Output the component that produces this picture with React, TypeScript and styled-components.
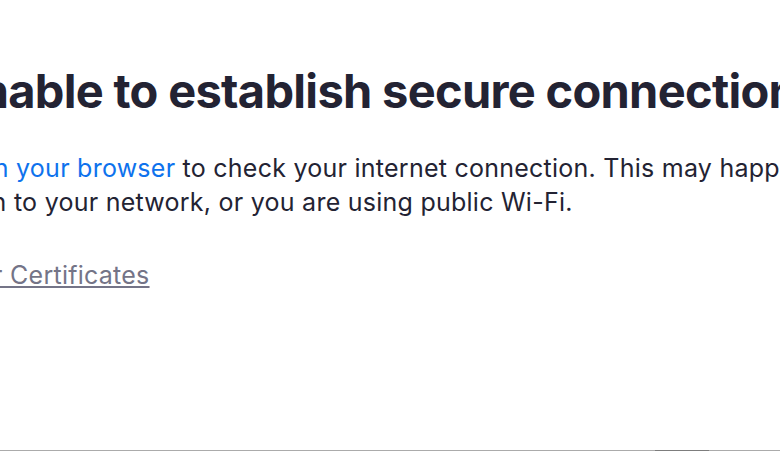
import React from "react";
import styled, { createGlobalStyle } from "styled-components";

const Global = createGlobalStyle`
  html, body { margin: 0; padding: 0; background: #fff; }
  body { font-family: Inter, "Noto Sans", sans-serif; -webkit-font-smoothing: antialiased; }
`;

const Page = styled.div`
  width: 780px;
  height: 452px;
  overflow: hidden;
  display: flex;
  flex-direction: column;
  background: #fff;
`;

const Viewport = styled.div`
  flex: 1;
  overflow: hidden;
`;

const Content = styled.main<{ $scrollX: number }>`
  margin-left: ${(p) => -p.$scrollX}px;
  padding-top: 63px;
  white-space: nowrap;
  color: #232333;
`;

const Heading = styled.h1`
  margin: 0;
  font-size: 47px;
  font-weight: 700;
  line-height: 56px;
  letter-spacing: -0.7px;
  color: #232333;
`;

const Paragraph = styled.p`
  margin: 32px 0 0;
  font-size: 25px;
  line-height: 34px;
  letter-spacing: 0.25px;
  color: #232333;
`;

const Line = styled.span`
  display: block;
`;

const Link = styled.a`
  color: #0e72ed;
  text-decoration: none;
`;

const CertLink = styled.a`
  display: block;
  width: fit-content;
  margin-top: 39px;
  font-size: 25px;
  line-height: 34px;
  letter-spacing: 0.25px;
  color: #747487;
  text-decoration: underline;
  text-underline-offset: 2px;
  text-decoration-thickness: 1.5px;
`;

const ScrollTrack = styled.div`
  height: 1px;
  margin-bottom: 1px;
  background: #ababab;
  display: flex;
`;

const ScrollThumb = styled.div`
  margin-left: 655px;
  width: 54px;
  background: #7d7d7d;
`;

export default function App() {
  return (
    <>
      <Global />
      <Page>
        <Viewport>
          <Content $scrollX={54}>
            <Heading>Unable to establish secure connection</Heading>
            <Paragraph>
              <Line>
                Go <Link href="#">in your browser</Link> to check your internet connection. This may happen if your
                proxy is not
              </Line>
              <Line>open to your network, or you are using public Wi-Fi.</Line>
            </Paragraph>
            <CertLink href="#">User Certificates</CertLink>
          </Content>
        </Viewport>
        <ScrollTrack>
          <ScrollThumb />
        </ScrollTrack>
      </Page>
    </>
  );
}
